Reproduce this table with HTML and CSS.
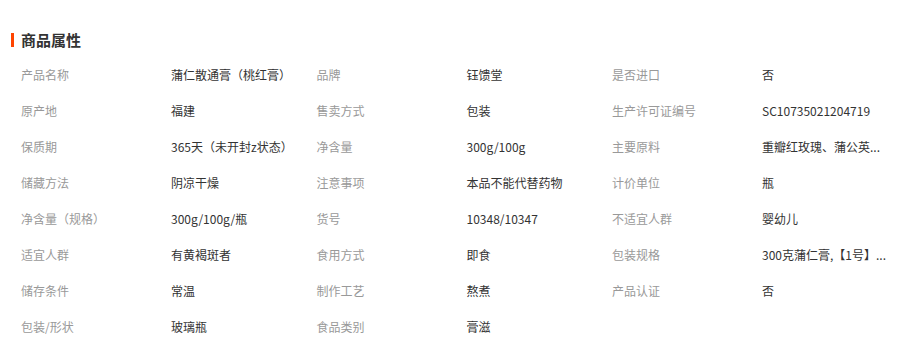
FILE: index.html
```html
<!DOCTYPE html>
<html lang="zh-CN">
<head>
<meta charset="utf-8">
<title>商品属性</title>
<link rel="stylesheet" href="styles.css">
</head>
<body>
<div class="attrs">
  <h3 class="attrs-title">商品属性</h3>
  <ul class="attrs-list">
    <li class="attr"><span class="attr-name">产品名称</span><span class="attr-value">蒲仁散通膏（桃红膏）</span></li>
    <li class="attr"><span class="attr-name">品牌</span><span class="attr-value">钰馈堂</span></li>
    <li class="attr"><span class="attr-name">是否进口</span><span class="attr-value">否</span></li>
    <li class="attr"><span class="attr-name">原产地</span><span class="attr-value">福建</span></li>
    <li class="attr"><span class="attr-name">售卖方式</span><span class="attr-value">包装</span></li>
    <li class="attr"><span class="attr-name">生产许可证编号</span><span class="attr-value">SC10735021204719</span></li>
    <li class="attr"><span class="attr-name">保质期</span><span class="attr-value">365天（未开封z状态）</span></li>
    <li class="attr"><span class="attr-name">净含量</span><span class="attr-value">300g/100g</span></li>
    <li class="attr"><span class="attr-name">主要原料</span><span class="attr-value">重瓣红玫瑰、蒲公英...</span></li>
    <li class="attr"><span class="attr-name">储藏方法</span><span class="attr-value">阴凉干燥</span></li>
    <li class="attr"><span class="attr-name">注意事项</span><span class="attr-value">本品不能代替药物</span></li>
    <li class="attr"><span class="attr-name">计价单位</span><span class="attr-value">瓶</span></li>
    <li class="attr"><span class="attr-name">净含量（规格）</span><span class="attr-value">300g/100g/瓶</span></li>
    <li class="attr"><span class="attr-name">货号</span><span class="attr-value">10348/10347</span></li>
    <li class="attr"><span class="attr-name">不适宜人群</span><span class="attr-value">婴幼儿</span></li>
    <li class="attr"><span class="attr-name">适宜人群</span><span class="attr-value">有黄褐斑者</span></li>
    <li class="attr"><span class="attr-name">食用方式</span><span class="attr-value">即食</span></li>
    <li class="attr"><span class="attr-name">包装规格</span><span class="attr-value">300克蒲仁膏,【1号】...</span></li>
    <li class="attr"><span class="attr-name">储存条件</span><span class="attr-value">常温</span></li>
    <li class="attr"><span class="attr-name">制作工艺</span><span class="attr-value">熬煮</span></li>
    <li class="attr"><span class="attr-name">产品认证</span><span class="attr-value">否</span></li>
    <li class="attr"><span class="attr-name">包装/形状</span><span class="attr-value">玻璃瓶</span></li>
    <li class="attr"><span class="attr-name">食品类别</span><span class="attr-value">膏滋</span></li>
  </ul>
</div>
</body>
</html>
```

FILE: styles.css
```css
html, body {
  margin: 0;
  padding: 0;
  background: #fff;
}
body {
  font-family: "Noto Sans CJK SC", "Noto Sans", sans-serif;
  font-size: 12px;
  color: #333;
}
.attrs {
  padding: 33px 0 0 11px;
}
.attrs-title {
  margin: 0;
  border-left: 3px solid #ff4400;
  padding-left: 7px;
  font-size: 15px;
  line-height: 14px;
  height: 14px;
  font-weight: bold;
  color: #333;
}
.attrs-list {
  list-style: none;
  margin: 9px 0 0 10px;
  padding: 0;
  display: grid;
  grid-template-columns: repeat(3, 295.5px);
  grid-auto-rows: 36px;
}
.attr {
  display: flex;
  align-items: center;
  white-space: nowrap;
}
.attr-name {
  width: 150px;
  flex: none;
  color: #999;
}
.attr-value {
  color: #333;
}
```
